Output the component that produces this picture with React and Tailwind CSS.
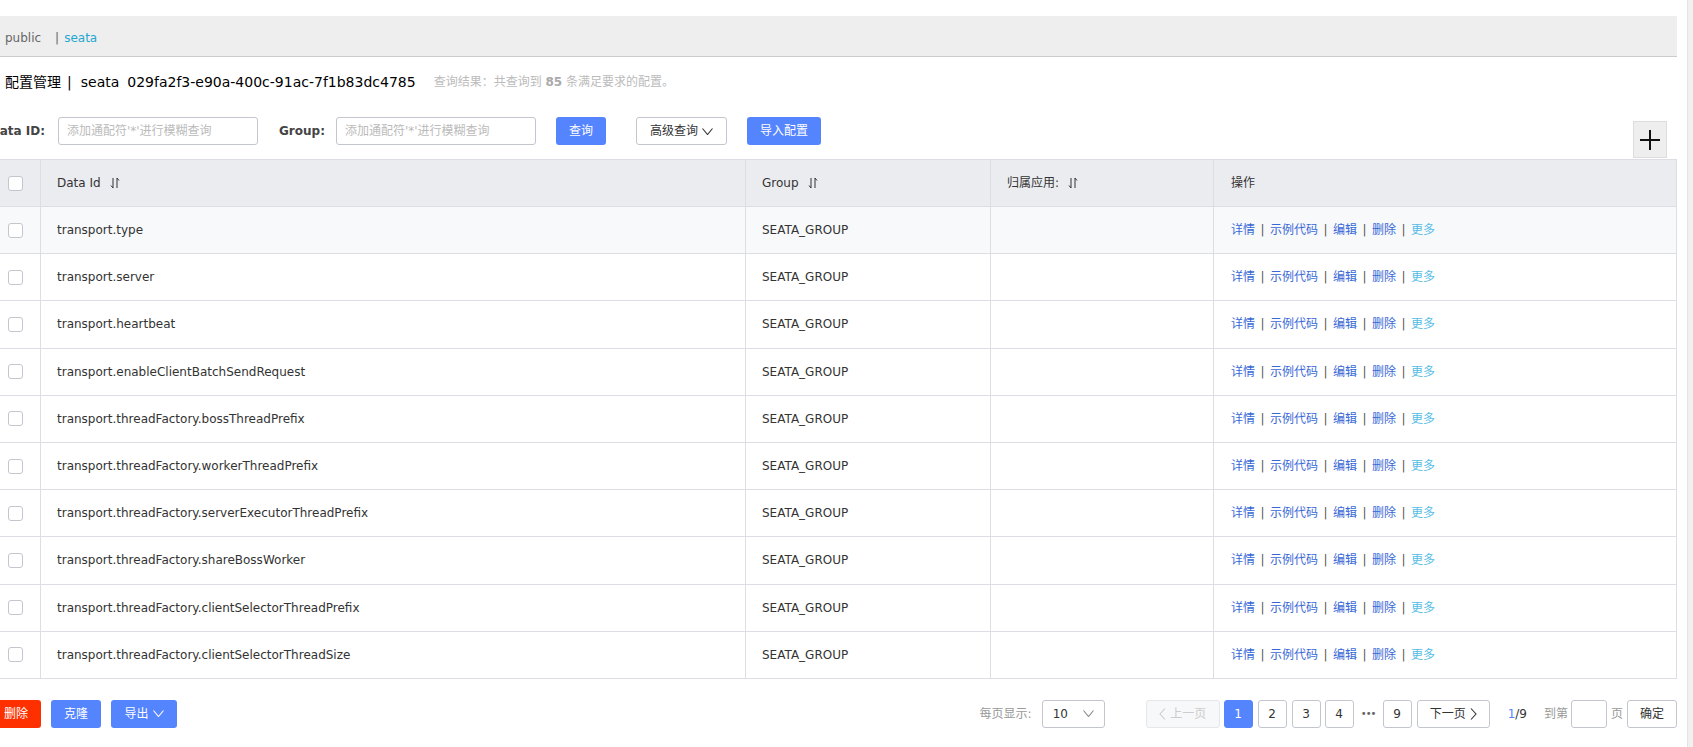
import React from "react";

const rows = [
  "transport.type",
  "transport.server",
  "transport.heartbeat",
  "transport.enableClientBatchSendRequest",
  "transport.threadFactory.bossThreadPrefix",
  "transport.threadFactory.workerThreadPrefix",
  "transport.threadFactory.serverExecutorThreadPrefix",
  "transport.threadFactory.shareBossWorker",
  "transport.threadFactory.clientSelectorThreadPrefix",
  "transport.threadFactory.clientSelectorThreadSize",
];

const SortIcon = () => (
  <svg width="10" height="12" viewBox="0 0 10 12" fill="none" stroke="#333" strokeWidth="1" className="ml-[9px]">
    <path d="M3 1v10L1 8.5" />
    <path d="M7 11V1l2 2.5" />
  </svg>
);

const Chevron = ({ color = "#333", className = "" }) => (
  <svg width="11" height="7" viewBox="0 0 11 7" fill="none" stroke={color} strokeWidth="1.1" className={className}>
    <path d="M0.5 0.5L5.5 6.5L10.5 0.5" />
  </svg>
);

const Checkbox = () => (
  <div className="w-[15px] h-[15px] rounded-[3px] border border-[#c4c6cf] bg-white" />
);

const Sep = () => <span className="w-[15px] text-center text-[#555]">|</span>;

const Ops = () => (
  <div className="flex items-center text-[#3768d6]">
    <span>详情</span>
    <Sep />
    <span>示例代码</span>
    <Sep />
    <span>编辑</span>
    <Sep />
    <span>删除</span>
    <Sep />
    <span className="text-[#56bde6]">更多</span>
  </div>
);

const cols = "grid grid-cols-[41px_705px_245px_223px_463px]";

const PageBtn = ({ children, active, className = "" }) => (
  <div
    className={
      "h-[28px] w-[29px] flex items-center justify-center rounded-[3px] border " +
      (active ? "bg-[#5584ff] border-[#5584ff] text-white " : "bg-white border-[#c4c6cf] text-[#333] ") +
      className
    }
  >
    {children}
  </div>
);

export default function App() {
  return (
    <div className="w-[1693px] h-[747px] overflow-hidden bg-white flex text-[12px] text-[#333] font-['DejaVu_Sans','Noto_Sans_CJK_SC',sans-serif]">
      <div className="w-[1687px] shrink-0 pt-[16px]">
        <div className="w-[1677px]">
          {/* namespace bar */}
          <div className="h-[41px] bg-[#eeeeee] border-b border-[#cccccc] flex items-center pl-[5px] pt-[3px] text-[#666]">
            <span>public</span>
            <span className="ml-[14px]">|</span>
            <span className="ml-[5px] text-[#1fa8d2]">seata</span>
          </div>

          {/* title */}
          <div className="mt-[15px] h-[20px] flex items-center pl-[5px]">
            <div className="flex items-center text-[14px] text-[#000] whitespace-nowrap">
              <span>配置管理</span>
              <span className="ml-[6px]">|</span>
              <span className="ml-[9px]">seata</span>
              <span className="ml-[8px]">029fa2f3-e90a-400c-91ac-7f1b83dc4785</span>
            </div>
            <span className="ml-[18px] text-[#bbb] whitespace-nowrap">
              查询结果：共查询到 <b className="text-[#aaa]">85</b> 条满足要求的配置。
            </span>
          </div>

          {/* filters */}
          <div className="mt-[25px] h-[42px] flex items-start">
            <div className="-ml-[10px] w-[55px] h-[28px] flex items-center justify-end font-bold text-[12px] text-[#444] whitespace-nowrap">
              Data ID:
            </div>
            <div className="ml-[13px] w-[200px] h-[28px] rounded-[3px] border border-[#c4c6cf] flex items-center pl-[8px] text-[#bbb] whitespace-nowrap">
              添加通配符'*'进行模糊查询
            </div>
            <div className="ml-[21px] w-[45px] h-[28px] flex items-center font-bold text-[12px] text-[#444] whitespace-nowrap">
              Group:
            </div>
            <div className="ml-[12px] w-[200px] h-[28px] rounded-[3px] border border-[#c4c6cf] flex items-center pl-[8px] text-[#bbb] whitespace-nowrap">
              添加通配符'*'进行模糊查询
            </div>
            <div className="ml-[20px] w-[50px] h-[28px] rounded-[3px] bg-[#5584ff] text-white flex items-center justify-center">
              查询
            </div>
            <div className="ml-[30px] w-[91px] h-[28px] rounded-[3px] border border-[#c4c6cf] bg-white flex items-center justify-center gap-[4px]">
              高级查询
              <Chevron />
            </div>
            <div className="ml-[20px] w-[74px] h-[28px] rounded-[3px] bg-[#5584ff] text-white flex items-center justify-center">
              导入配置
            </div>
            <div className="ml-auto mr-[10px] mt-[4px] w-[34px] h-[37px] border border-[#dddddd] bg-[#eeeeee] flex items-center justify-center">
              <svg width="20" height="20" viewBox="0 0 20 20" stroke="#111" strokeWidth="2">
                <path d="M0 10h20M10 0v20" />
              </svg>
            </div>
          </div>

          {/* table */}
          <div className="border-t border-r border-[#dcdee3]">
            <div className={cols + " h-[47px] bg-[#ebecf0] border-b border-[#dcdee3]"}>
              <div className="border-r border-[#dcdee3] flex items-center pl-[8px]">
                <Checkbox />
              </div>
              <div className="border-r border-[#dcdee3] flex items-center pl-[16px]">
                Data Id
                <SortIcon />
              </div>
              <div className="border-r border-[#dcdee3] flex items-center pl-[16px]">
                Group
                <SortIcon />
              </div>
              <div className="border-r border-[#dcdee3] flex items-center pl-[16px]">
                归属应用:
                <SortIcon />
              </div>
              <div className="flex items-center pl-[17px]">操作</div>
            </div>
            {rows.map((r, i) => (
              <div
                key={r}
                className={cols + " h-[47.2px] border-b border-[#dcdee3] " + (i === 0 ? "bg-[#f8f9fb]" : "bg-white")}
              >
                <div className="border-r border-[#dcdee3] flex items-center pl-[8px]">
                  <Checkbox />
                </div>
                <div className="border-r border-[#dcdee3] flex items-center pl-[16px]">{r}</div>
                <div className="border-r border-[#dcdee3] flex items-center pl-[16px]">SEATA_GROUP</div>
                <div className="border-r border-[#dcdee3]" />
                <div className="flex items-center pl-[17px]">
                  <Ops />
                </div>
              </div>
            ))}
          </div>

          {/* footer */}
          <div className="mt-[21px] h-[28px] flex items-center">
            <div className="-ml-[9px] w-[50px] h-[28px] rounded-[3px] bg-[#ff3000] text-white flex items-center justify-center">
              删除
            </div>
            <div className="ml-[10px] w-[50px] h-[28px] rounded-[3px] bg-[#5584ff] text-white flex items-center justify-center">
              克隆
            </div>
            <div className="ml-[10px] w-[66px] h-[28px] rounded-[3px] bg-[#5584ff] text-white flex items-center justify-center gap-[4px]">
              导出
              <Chevron color="#fff" />
            </div>

            <div className="ml-auto flex items-center">
              <span className="text-[#999]">每页显示:</span>
              <div className="ml-[10px] w-[63px] h-[28px] rounded-[3px] border border-[#c4c6cf] flex items-center justify-between pl-[10px] pr-[10px]">
                <span>10</span>
                <Chevron color="#888" />
              </div>
              <div className="ml-[41px] w-[74px] h-[28px] rounded-[3px] border border-[#e6e7eb] bg-[#f7f8fa] text-[#ccc] flex items-center justify-center gap-[4px]">
                <svg width="7" height="12" viewBox="0 0 7 12" fill="none" stroke="#ccc" strokeWidth="1.1">
                  <path d="M6 0.5L1 6l5 5.5" />
                </svg>
                上一页
              </div>
              <PageBtn active className="ml-[4px]">1</PageBtn>
              <PageBtn className="ml-[5px]">2</PageBtn>
              <PageBtn className="ml-[5px]">3</PageBtn>
              <PageBtn className="ml-[4px]">4</PageBtn>
              <div className="w-[29px] h-[28px] flex items-center justify-center text-[#666] text-[10px] tracking-[-1px]">•••</div>
              <PageBtn>9</PageBtn>
              <div className="ml-[5px] w-[73px] h-[28px] rounded-[3px] border border-[#c4c6cf] bg-white flex items-center justify-center gap-[4px]">
                下一页
                <svg width="7" height="12" viewBox="0 0 7 12" fill="none" stroke="#333" strokeWidth="1.1">
                  <path d="M1 0.5L6 6l-5 5.5" />
                </svg>
              </div>
              <span className="ml-[18px]">
                <span className="text-[#5584ff]">1</span>/9
              </span>
              <span className="ml-[17px] text-[#999]">到第</span>
              <div className="ml-[3px] w-[36px] h-[28px] rounded-[3px] border border-[#c4c6cf]" />
              <span className="ml-[4px] text-[#999]">页</span>
              <div className="ml-[4px] w-[50px] h-[28px] rounded-[3px] border border-[#c4c6cf] bg-white flex items-center justify-center">
                确定
              </div>
            </div>
          </div>
        </div>
      </div>
      <div className="flex-1 bg-[#f1f1f1] border-l border-[#e3e3e3]" />
    </div>
  );
}
